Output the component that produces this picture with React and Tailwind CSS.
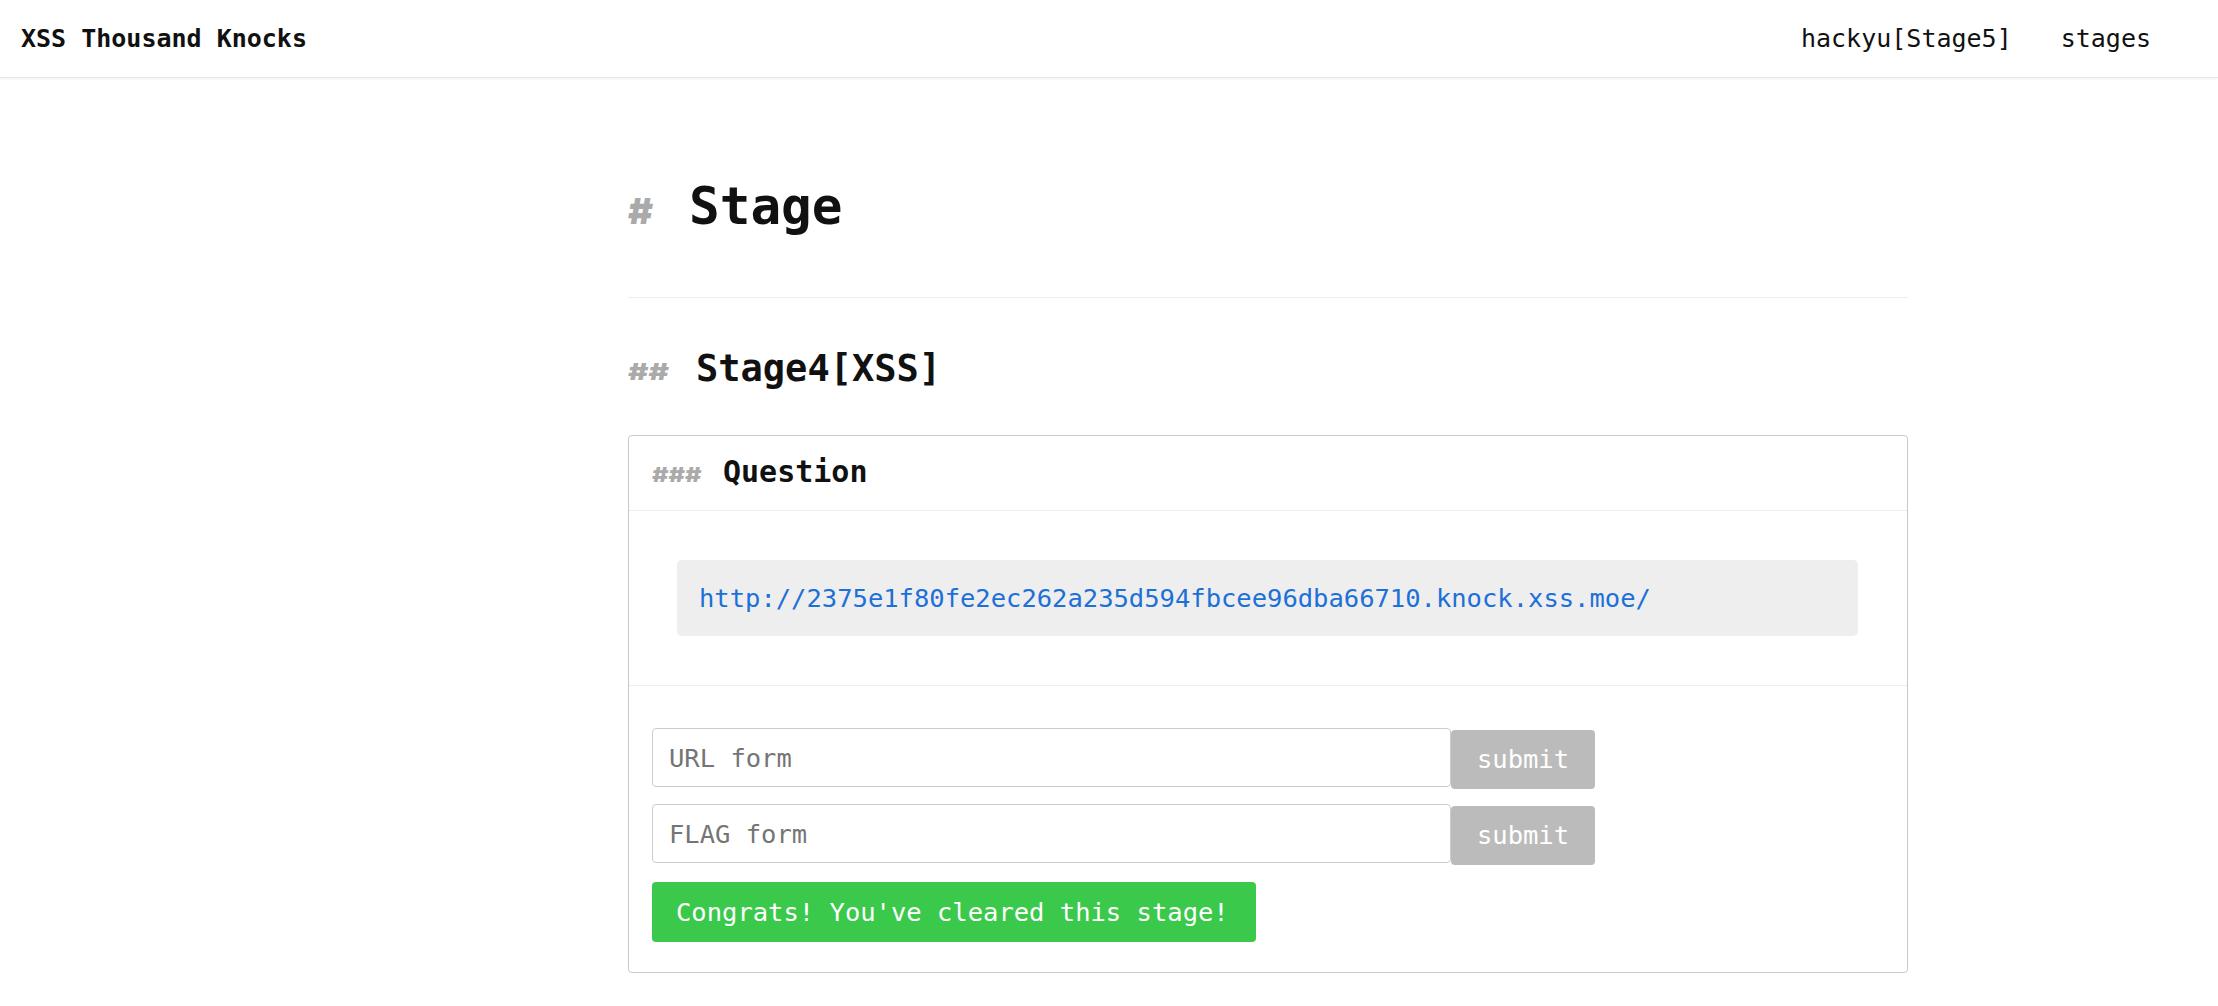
import { useState } from "react";

const mono = "font-['DejaVu_Sans_Mono',monospace]";

// 見出しの前に付くグレーの # 記号（ベースライン基準で縦に潰す）
function Hashes({ count, className }) {
  return (
    <span
      className={`inline-block leading-none origin-[50%_76%] font-['Inter',sans-serif] text-[#aaaaaa] font-black ${className}`}
    >
      {"#".repeat(count)}
    </span>
  );
}

function FormRow({ placeholder }) {
  const [value, setValue] = useState("");
  return (
    <div className="flex items-start">
      <input
        type="text"
        value={value}
        onChange={(e) => setValue(e.target.value)}
        placeholder={placeholder}
        className="w-[799px] h-[59px] border border-[#cccccc] rounded-[4px] pl-[16px] text-[25.5px] text-[#333] placeholder:text-[#757575] outline-none"
      />
      <button className="mt-[2px] w-[144px] h-[59px] bg-[#bbbbbb] rounded-[4px] text-white text-[25.5px]">
        submit
      </button>
    </div>
  );
}

export default function App() {
  return (
    <div className={`min-h-screen bg-white text-[#111111] ${mono}`}>
      {/* ヘッダー */}
      <header className="h-[78px] flex items-center justify-between pl-[21px] pr-[67px] border-b border-[#e6e6e6] shadow-[0_1px_3px_rgba(0,0,0,0.06)]">
        <span className="text-[25px] font-bold">XSS Thousand Knocks</span>
        <nav className="flex items-center gap-[49px] text-[25px]">
          <span>hackyu[Stage5]</span>
          <span>stages</span>
        </nav>
      </header>

      <main className="ml-[628px] w-[1280px]">
        {/* # Stage */}
        <h1 className="mt-[99px] h-[60px] leading-[60px] flex items-baseline text-[51px] font-bold">
          <Hashes count={1} className="w-[61px] text-[38px] scale-y-[0.95]" />
          <span>Stage</span>
        </h1>
        <hr className="mt-[60px] border-0 border-t border-[#eeeeee]" />

        {/* ## Stage4[XSS] */}
        <h2 className="mt-[49px] h-[44px] leading-[44px] flex items-baseline text-[37px] font-bold">
          <Hashes count={2} className="w-[68px] text-[31px] scale-y-[0.74]" />
          <span>Stage4[XSS]</span>
        </h2>

        {/* カード */}
        <section className="mt-[44px] border border-[#c8c8c8] rounded-[4px]">
          <div className="h-[75px] border-b border-[#eeeeee] pl-[23px] pt-[19px] flex items-baseline">
            <Hashes count={3} className="w-[71px] text-[25px] scale-y-[0.8]" />
            <span className="text-[30px] leading-[34px] font-bold">Question</span>
          </div>

          <div className="pt-[49px] pb-[49px] pl-[48px] pr-[49px] border-b border-[#eeeeee]">
            <div className="h-[76px] bg-[#eeeeee] rounded-[5px] flex items-center pl-[22px]">
              <a href="#" className="text-[#1c70d8] text-[25.5px]">
                http://2375e1f80fe2ec262a235d594fbcee96dba66710.knock.xss.moe/
              </a>
            </div>
          </div>

          <div className="pt-[42px] pb-[30px] pl-[23px] flex flex-col">
            <FormRow placeholder="URL form" />
            <div className="mt-[15px]">
              <FormRow placeholder="FLAG form" />
            </div>
            <div className="mt-[17px] w-[604px] h-[60px] bg-[#3bc94b] rounded-[4px] flex items-center pl-[24px] text-white text-[25.5px]">
              Congrats! You've cleared this stage!
            </div>
          </div>
        </section>
      </main>
    </div>
  );
}
